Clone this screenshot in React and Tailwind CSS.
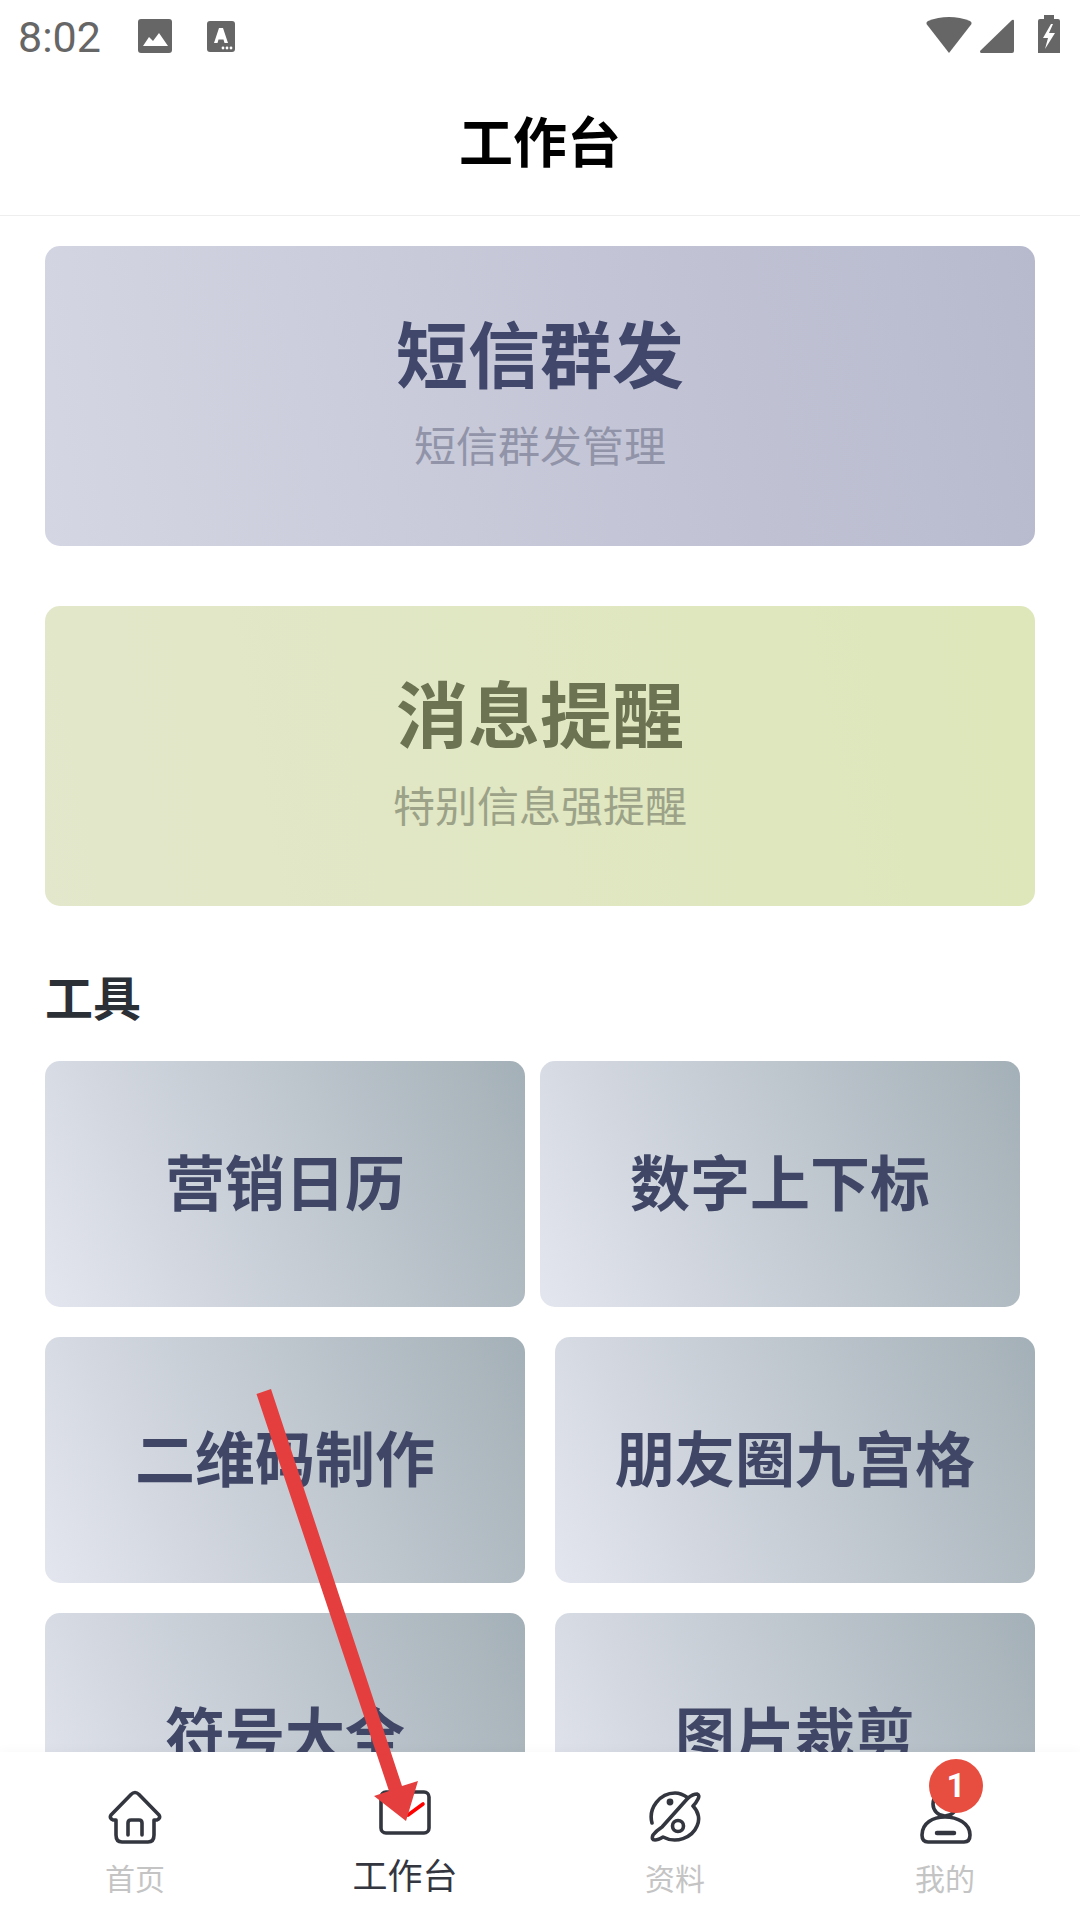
const F = "font-['Roboto','Noto_Sans_CJK_SC',sans-serif]";

function Banner({ title, sub, bg, tc, sc, mt }) {
  return (
    <div className={`h-[300px] rounded-[15px] flex flex-col items-center ${bg} ${mt}`}>
      <div className={`mt-[67px] text-[72px] leading-[90px] font-bold ${tc}`}>{title}</div>
      <div className={`mt-[17px] text-[42px] leading-[56px] ${sc}`}>{sub}</div>
    </div>
  );
}

function Tool({ label }) {
  return (
    <div className="w-[480px] h-[246px] shrink-0 rounded-[15px] bg-linear-65 from-[#e4e6ef] to-[#a4b0b7] flex items-center justify-center">
      <span className="text-[60px] leading-[80px] font-bold text-[#404766] translate-y-[2px]">{label}</span>
    </div>
  );
}

function NavItem({ icon, label, active, badge }) {
  return (
    <div className="relative flex-1 flex flex-col items-center pt-[38px]">
      {icon}
      <div className={active ? "mt-[17px] text-[35px] leading-[46px] text-[#33363f]" : "mt-[15px] text-[30px] leading-[42px] text-[#c4c4c4]"}>{label}</div>
      {badge}
    </div>
  );
}

const s = { fill: "none", stroke: "#33363f", strokeWidth: 3.6, strokeLinecap: "round", strokeLinejoin: "round" };

export default function App() {
  return (
    <div className={`relative w-[1080px] h-[1920px] overflow-hidden bg-white ${F}`}>
      <div className="h-[216px] border-b border-[#eeeeee] bg-white">
        <div className="h-[70px] relative flex items-center text-[#666666]">
          <span className="ml-[18px] text-[43px] leading-[70px] font-['Roboto',sans-serif] translate-y-[2px]">8:02</span>
          <svg className="absolute left-[138px] top-[19px]" width="34" height="34" viewBox="0 0 34 34">
            <rect x="0" y="0" width="34" height="34" rx="3" fill="#666" />
            <path d="M5 27 L11 18 L15 22 L21 14 L30 27 Z" fill="#fff" />
          </svg>
          <svg className="absolute left-[207px] top-[21px]" width="28" height="31" viewBox="0 0 28 31">
            <rect x="0" y="0" width="28" height="31" rx="3" fill="#666" />
            <path d="M7 22 L12 7 h4 l5 15 h-3.5 l-1-3.5 h-5 l-1 3.5 Z" fill="#fff" />
            <circle cx="16" cy="27" r="1.4" fill="#fff" /><circle cx="20" cy="27" r="1.4" fill="#fff" /><circle cx="24" cy="27" r="1.4" fill="#fff" />
          </svg>
          <svg className="absolute left-[925px] top-[14px]" width="135" height="40" viewBox="0 0 135 40">
            <path d="M24 39 L1.5 10 Q1 8 3 7 Q13 3 24 3 Q35 3 45 7 Q47 8 46.5 10 Z" fill="#666" />
            <path d="M56 39 Q55 39 55 37 L87 6 Q89 5 89 7 V37 Q89 39 87 39 Z" fill="#666" />
            <path d="M113 39 V7 Q113 5 115 5 H119 V1 H129 V5 H133 Q135 5 135 7 V39 Z" fill="#666" />
            <path d="M126 10 L118 24 H123 L120 35 L130 19 H124 L128 10 Z" fill="#fff" />
          </svg>
        </div>
        <div className="h-[145px] flex items-center justify-center text-[54px] font-bold text-black pt-[4px]">工作台</div>
      </div>

      <div className="px-[45px] pt-[30px]">
        <Banner title="短信群发" sub="短信群发管理" bg="bg-linear-80 from-[#d4d6e3] to-[#b7b9cd]" tc="text-[#40476a]" sc="text-[#9194a8]" mt="" />
        <Banner title="消息提醒" sub="特别信息强提醒" bg="bg-linear-80 from-[#e3e7cb] to-[#dde7b9]" tc="text-[#6b7353]" sc="text-[#9ca288]" mt="mt-[60px]" />
        <div className="mt-[64px] text-[48px] leading-[60px] font-bold text-[#2b2f36]">工具</div>
        <div className="mt-[31px] flex gap-[15px]"><Tool label="营销日历" /><Tool label="数字上下标" /></div>
        <div className="mt-[30px] flex justify-between"><Tool label="二维码制作" /><Tool label="朋友圈九宫格" /></div>
        <div className="mt-[30px] flex justify-between"><Tool label="符号大全" /><Tool label="图片裁剪" /></div>
      </div>

      <div className="absolute left-0 right-0 top-[1752px] h-[168px] bg-white flex shadow-[0_-4px_8px_rgba(0,0,0,0.02)]">
        <NavItem label="首页" icon={
          <svg width="54" height="54" viewBox="0 0 54 54" {...s}>
            <path d="M27 2.5 Q25 2.5 23 4.5 L3 25 Q1 28 5 30 H8 V45 Q8 52 14 52 H40 Q46 52 46 45 V30 H49 Q53 28 51 25 L31 4.5 Q29 2.5 27 2.5 Z" />
            <path d="M20 45 V33 Q20 30 23 30 H31 Q34 30 34 33 V45" />
          </svg>} />
        <NavItem active label="工作台" icon={
          <svg width="54" height="48" viewBox="0 0 54 48" {...s} className="shrink-0">
            <rect x="3" y="2" width="48" height="41" rx="5" />
            <path d="M30 25 L45 14" stroke="#ff0000" />
          </svg>} />
        <NavItem label="资料" icon={
          <svg width="54" height="54" viewBox="0 0 54 54" {...s}>
            <path d="M4 33 C0 18 12 3 27 3 C32 3 36 5 40 8" />
            <path d="M14 37 L40 8 Q45 4 49 4 Q52 5 50 9 Q48 13 45 16 C51 22 52 30 49 36 C44 48 28 54 15 47 Q10 50 7 50 Q3 50 5 45 Q8 41 14 37 Z" />
            <circle cx="30" cy="36" r="5.5" />
            <circle cx="22" cy="12" r="1.6" fill="#33363f" />
          </svg>} />
        <NavItem label="我的"
          icon={
            <svg width="54" height="54" viewBox="0 0 54 54" {...s}>
              <circle cx="27" cy="14" r="12" />
              <path d="M4 45 C4 33 15 27 27 27 C39 27 52 33 52 45 Q52 52 46 52 H10 Q4 52 4 45 Z" />
              <path d="M19 43 H36" strokeWidth="4.5" />
            </svg>}
          badge={
            <div className="absolute left-[119px] top-[7px] w-[54px] h-[54px] rounded-full bg-[#e74e40] text-white flex items-center justify-center text-[33px] font-bold font-['Roboto',sans-serif]">1</div>
          } />
      </div>

      <svg className="absolute left-0 top-0 pointer-events-none" width="1080" height="1920" viewBox="0 0 1080 1920">
        <path d="M256.5 1394 L271 1389 L402 1786 L418 1781 L406 1821 L374 1796 L389 1791 Z" fill="#e53e3e" />
      </svg>
    </div>
  );
}
